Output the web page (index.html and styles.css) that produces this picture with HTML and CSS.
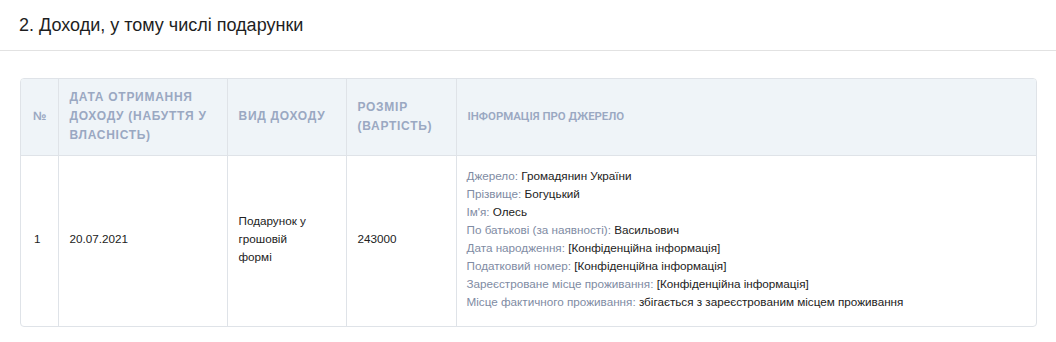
FILE: index.html
```html
<!DOCTYPE html>
<html lang="uk">
<head>
  <meta charset="UTF-8">
  <title>Доходи, у тому числі подарунки</title>
  <link rel="stylesheet" href="styles.css">
</head>
<body>

  <div class="section-head">
    <h2>2. Доходи, у тому числі подарунки</h2>
  </div>

  <div class="section-body">
    <div class="table-wrap">
      <table class="decl-table">
        <colgroup>
          <col class="w-num">
          <col class="w-date">
          <col class="w-type">
          <col class="w-size">
          <col>
        </colgroup>
        <thead>
          <tr>
            <th class="col-num">№</th>
            <th>Дата отримання доходу (набуття у власність)</th>
            <th>Вид доходу</th>
            <th>Розмір (вартість)</th>
            <th class="col-info">Інформація про джерело</th>
          </tr>
        </thead>
        <tbody>
          <tr>
            <td class="col-num">1</td>
            <td>20.07.2021</td>
            <td class="col-type">Подарунок у грошовій формі</td>
            <td>243000</td>
            <td class="col-info">
              <div><span class="label">Джерело:</span> Громадянин України</div>
              <div><span class="label">Прізвище:</span> Богуцький</div>
              <div><span class="label">Ім'я:</span> Олесь</div>
              <div><span class="label">По батькові (за наявності):</span> Васильович</div>
              <div><span class="label">Дата народження:</span> [Конфіденційна інформація]</div>
              <div><span class="label">Податковий номер:</span> [Конфіденційна інформація]</div>
              <div><span class="label">Зареєстроване місце проживання:</span> [Конфіденційна інформація]</div>
              <div><span class="label">Місце фактичного проживання:</span> збігається з зареєстрованим місцем проживання</div>
            </td>
          </tr>
        </tbody>
      </table>
    </div>
  </div>

</body>
</html>
```

FILE: styles.css
```css
body {
  margin: 0;
  font-family: "Liberation Sans", Arial, sans-serif;
  color: #222;
  background: #fff;
}

.section-head {
  padding: 13px 19px 0;
  height: 37px;
  border-bottom: 1px solid #e2e2e2;
}

.section-head h2 {
  margin: 0;
  font-size: 18px;
  font-weight: normal;
  line-height: 24px;
  color: #1e1e1e;
}

.section-body {
  padding: 27px 20px 0 20px;
}

.table-wrap {
  width: 1015px;
  border: 1px solid #dfe3e8;
  border-radius: 4px;
  overflow: hidden;
}

.decl-table {
  width: 100%;
  table-layout: fixed;
  border-collapse: collapse;
  font-size: 11.7px;
}

.w-num { width: 37px; }
.w-date { width: 169px; }
.w-type { width: 119px; }
.w-size { width: 110px; }

.decl-table th,
.decl-table td {
  border-left: 1px solid #dfe3e8;
  text-align: left;
  vertical-align: middle;
}

.decl-table th:first-child,
.decl-table td:first-child {
  border-left: none;
}

.decl-table th {
  background: #eff4f8;
  color: #9aa8c2;
  font-weight: bold;
  font-size: 12px;
  letter-spacing: 0.06em;
  text-transform: uppercase;
  line-height: 19px;
  padding: 9px 11px 10px;
  border-bottom: 1px solid #dfe3e8;
}

.decl-table th.col-info {
  font-weight: 600;
  font-size: 11.4px;
  letter-spacing: 0;
  font-family: Roboto, "Liberation Sans", sans-serif;
}

.decl-table td {
  padding: 11px 11px 15px;
  line-height: 18px;
  color: #222;
}

.decl-table .col-num {
  padding-left: 12px;
  padding-right: 0;
}

.decl-table td.col-num {
  padding-left: 13px;
}

.decl-table td.col-type {
  padding-right: 30px;
}

.decl-table td.col-info {
  padding-left: 10px;
}

.label {
  color: #808ba3;
}
```
